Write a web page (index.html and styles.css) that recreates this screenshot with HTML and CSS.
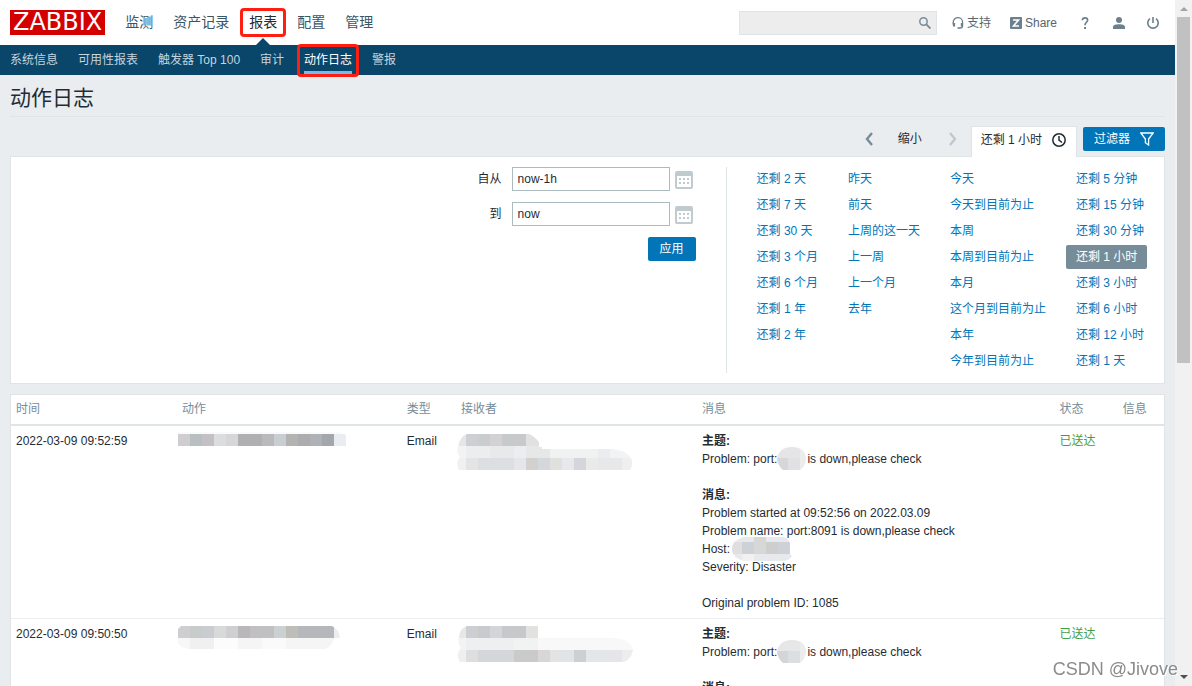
FILE: index.html
```html
<!DOCTYPE html>
<html lang="zh-CN">
<head>
<meta charset="utf-8">
<title>动作日志</title>
<link rel="stylesheet" href="styles.css">
</head>
<body>
<div class="page">
  <header class="top">
    <a class="logo" href="#">ZABBIX</a>
    <nav class="menu">
      <a href="#">监测</a>
      <a href="#">资产记录</a>
      <a href="#" class="active">报表</a>
      <a href="#">配置</a>
      <a href="#">管理</a>
    </nav>
    <form class="search">
      <input type="text" aria-label="搜索">
      <button type="button" aria-label="搜索"><svg width="12" height="12" viewBox="0 0 12 12" fill="none" stroke="currentColor"><circle cx="4.5" cy="4.5" r="3.7" stroke-width="1.5"/><path d="M7.3 7.3l4.2 4.2" stroke-width="1.9"/></svg></button>
    </form>
    <a class="tool" href="#"><svg width="12" height="12" viewBox="0 0 12 12" fill="none" stroke="currentColor"><path d="M1.2 7.5V5.3a4.7 4.7 0 0 1 9.4 0v3.5c0 1.6-1 2.2-2.6 2.2" stroke-width="1.3"/><path d="M2 6v3.6M9.9 6v3.6" stroke-width="2.2"/><path d="M5.5 11H8" stroke-width="1.6"/></svg>支持</a>
    <a class="tool share" href="#"><svg width="12" height="12" viewBox="0 0 12 12"><rect width="12" height="12" rx="1" fill="currentColor"/><path d="M3 3h5.500L3.500 9H9" fill="none" stroke="#fff" stroke-width="1.600"/></svg>Share</a>
    <a class="tool help" href="#" aria-label="帮助"><svg width="12" height="12" viewBox="0 0 12 12"><path d="M3.4 3.3C3.5 1.7 4.5.9 6 .9s2.6.9 2.6 2.3C8.600 5.300 6 5.300 6 8.200" fill="none" stroke="currentColor" stroke-width="1.700"/><rect x="5.100" y="10" width="1.900" height="2" fill="currentColor"/></svg></a>
    <a class="tool icon" href="#" aria-label="用户"><svg width="12" height="12" viewBox="0 0 12 12" fill="currentColor"><circle cx="6" cy="3" r="3"/><path d="M0 12V10C0 8 3 7.300 6 7.300S12 8 12 10v2z"/></svg></a>
    <a class="tool icon" href="#" aria-label="退出"><svg width="12" height="12" viewBox="0 0 12 12" fill="none" stroke="currentColor" stroke-width="1.600"><path d="M6 0v6M3 1.700A5.200 5.200 0 1 0 9 1.700"/></svg></a>
  </header>
  <nav class="submenu">
    <a href="#">系统信息</a>
    <a href="#">可用性报表</a>
    <a href="#">触发器 Top 100</a>
    <a href="#">审计</a>
    <a href="#" class="active">动作日志</a>
    <a href="#">警报</a>
  </nav>
  <main>
    <h1>动作日志</h1>
    <div class="tabs">
      <button type="button" class="nav-btn" aria-label="上一段"><svg width="8" height="14" viewBox="0 0 8 14" fill="none" stroke="#768d99" stroke-width="2.400"><path d="M7 1L2 7l5 6"/></svg></button>
      <button type="button" class="nav-btn zoom-out">缩小</button>
      <button type="button" class="nav-btn next" aria-label="下一段"><svg width="8" height="14" viewBox="0 0 8 14" fill="none" stroke="#c0c8cd" stroke-width="2.400"><path d="M1 1l5 6-5 6"/></svg></button>
      <a class="tab" href="#">还剩 1 小时<svg width="14" height="14" viewBox="0 0 14 14" fill="none" stroke="currentColor" stroke-width="1.500"><circle cx="7" cy="7" r="6.200"/><path d="M7 3v4.200l3 2.300"/></svg></a>
      <a class="tab-btn" href="#">过滤器<svg width="14" height="14" viewBox="0 0 14 14" fill="none" stroke="currentColor" stroke-width="1.300"><path d="M.8 1h12.400L8.600 7v6L5.400 10.700V7z"/></svg></a>
    </div>
    <section class="filter">
      <form class="range">
        <div class="field"><label for="from">自从</label><input id="from" type="text" value="now-1h"><button type="button" class="cal" aria-label="选择开始日期"><svg width="18" height="18" viewBox="0 0 18 18"><rect x="1" y="1" width="16" height="16" rx="1" fill="none" stroke="#c0cbd0" stroke-width="2"/><path d="M1 3h16" stroke="#c0cbd0" stroke-width="4"/><path d="M4 8h2m2 0h2m2 0h2M4 12h2m2 0h2m2 0h2" stroke="#c0cbd0" stroke-width="2"/></svg></button></div>
        <div class="field"><label for="to">到</label><input id="to" type="text" value="now"><button type="button" class="cal" aria-label="选择结束日期"><svg width="18" height="18" viewBox="0 0 18 18"><rect x="1" y="1" width="16" height="16" rx="1" fill="none" stroke="#c0cbd0" stroke-width="2"/><path d="M1 3h16" stroke="#c0cbd0" stroke-width="4"/><path d="M4 8h2m2 0h2m2 0h2M4 12h2m2 0h2m2 0h2" stroke="#c0cbd0" stroke-width="2"/></svg></button></div>
        <button type="button" class="apply">应用</button>
      </form>
      <div class="quick">
        <div><a href="#">还剩 2 天</a><a href="#">还剩 7 天</a><a href="#">还剩 30 天</a><a href="#">还剩 3 个月</a><a href="#">还剩 6 个月</a><a href="#">还剩 1 年</a><a href="#">还剩 2 年</a></div>
        <div><a href="#">昨天</a><a href="#">前天</a><a href="#">上周的这一天</a><a href="#">上一周</a><a href="#">上一个月</a><a href="#">去年</a></div>
        <div><a href="#">今天</a><a href="#">今天到目前为止</a><a href="#">本周</a><a href="#">本周到目前为止</a><a href="#">本月</a><a href="#">这个月到目前为止</a><a href="#">本年</a><a href="#">今年到目前为止</a></div>
        <div><a href="#">还剩 5 分钟</a><a href="#">还剩 15 分钟</a><a href="#">还剩 30 分钟</a><a href="#" class="selected">还剩 1 小时</a><a href="#">还剩 3 小时</a><a href="#">还剩 6 小时</a><a href="#">还剩 12 小时</a><a href="#">还剩 1 天</a></div>
      </div>
    </section>
    <table class="log">
      <colgroup><col class="c-time"><col class="c-action"><col class="c-type"><col class="c-to"><col class="c-msg"><col class="c-status"><col class="c-info"></colgroup>
      <thead><tr><th>时间</th><th>动作</th><th>类型</th><th>接收者</th><th>消息</th><th>状态</th><th>信息</th></tr></thead>
      <tbody>
        <tr>
          <td>2022-03-09 09:52:59</td>
          <td><svg class="mosaic" width="168" height="14" viewBox="0 0 168 14" shape-rendering="crispEdges"><path fill="#fafafb" d="M0 0h160l6 2H0z"/><path fill="#cfcdd0" d="M0 2h12v12H0z"/><path fill="#b9bfc1" d="M12 2h12v12H12z"/><path fill="#c3c1c4" d="M24 2h12v12H24z"/><path fill="#dcdddf" d="M36 2h12v12H36z"/><path fill="#d6d6d8" d="M48 2h12v12H48z"/><path fill="#b0afb2" d="M60 2h24v12H60z"/><path fill="#bab9bc" d="M84 2h12v12H84z"/><path fill="#c9ced1" d="M96 2h12v12H96z"/><path fill="#b3b4b1" d="M108 2h12v12h-12z"/><path fill="#adabae" d="M120 2h12v12h-12z"/><path fill="#aeb1b6" d="M132 2h12v12h-12z"/><path fill="#a3a6aa" d="M144 2h12v12h-12z"/><path fill="#e9ecf1" d="M156 2h10l2 2v10h-12z"/></svg></td>
          <td>Email</td>
          <td><svg class="mosaic" width="176" height="38" viewBox="0 0 176 38"><defs><clipPath id="m1"><path d="M10 2h62q5 2 10 8v5h3v2h70q14 1 19 9 3 6-1 12H2q-4-8 1-13-4-4-2-10Q3 4 10 2z"/></clipPath></defs><g clip-path="url(#m1)" shape-rendering="crispEdges"><path fill="#e6e6e7" d="M0 0h9v14H0z"/><path fill="#cdcfd3" d="M9 0h12v14H9z"/><path fill="#c9cdcd" d="M21 0h12v14H21z"/><path fill="#d2d2d4" d="M33 0h12v14H33z"/><path fill="#c6caca" d="M45 0h24v14H45z"/><path fill="#e1e1e2" d="M69 0h16v14H69z"/><path fill="#f5f3f2" d="M0 14h9v12H0z"/><path fill="#ecedef" d="M9 14h24v12H9z"/><path fill="#e8e9ea" d="M33 14h24v12H33z"/><path fill="#ecedee" d="M57 14h12v12H57z"/><path fill="#e6e7e7" d="M69 14h24v12H69z"/><path fill="#f0f1f1" d="M93 14h48v12H93z"/><path fill="#ebecf0" d="M141 14h12v12h-12z"/><path fill="#f3f3f5" d="M153 14h24v12h-24z"/><path fill="#eff0ef" d="M0 26h9v12H0z"/><path fill="#e4e4e4" d="M9 26h12v12H9z"/><path fill="#dcdee1" d="M21 26h36v12H21z"/><path fill="#e4e6e9" d="M57 26h12v12H57z"/><path fill="#d2d1cf" d="M69 26h12v12H69z"/><path fill="#d4d8dc" d="M81 26h12v12H81z"/><path fill="#e0e0de" d="M93 26h12v12H93z"/><path fill="#e8e8ea" d="M105 26h12v12h-12z"/><path fill="#d5d6db" d="M117 26h12v12h-12z"/><path fill="#ece9ea" d="M129 26h12v12h-12z"/><path fill="#e6e9e8" d="M141 26h24v12h-24z"/><path fill="#efeff1" d="M165 26h12v12h-12z"/></g></svg></td>
          <td class="message"><b>主题:</b><br>Problem: port:<span class="masked">8091<svg width="29" height="23" viewBox="0 0 29 23"><defs><clipPath id="m2"><path d="M0 12Q2 0 15 0t14 12q-1 8-6 11H6q-5-4-6-11z"/></clipPath></defs><g clip-path="url(#m2)" shape-rendering="crispEdges"><path fill="#e5e5e8" d="M0 0h29v12H0z"/><path fill="#d7d7db" d="M0 11h11v12H0z"/><path fill="#e1e1e3" d="M11 11h12v12H11z"/><path fill="#ebecec" d="M23 0h6v23h-6z"/></g></svg></span> is down,please check<br><br><b>消息:</b><br>Problem started at 09:52:56 on 2022.03.09<br>Problem name: port:8091 is down,please check<br>Host:<span class="masked host">&nbsp;<svg width="60" height="24" viewBox="0 0 60 24"><defs><clipPath id="m3"><path d="M12 0h38q6 0 8 6v11l2 2q-3 5-9 5H12Q0 21 0 12T12 0z"/></clipPath></defs><g clip-path="url(#m3)" shape-rendering="crispEdges"><path fill="#e8e9ec" d="M0 0h60v24H0z"/><path fill="#dfdfdf" d="M0 5h10v12H0z"/><path fill="#ccd2d6" d="M10 5h12v12H10z"/><path fill="#d7d7d8" d="M22 0h12v17H22z"/><path fill="#cecece" d="M34 5h12v12H34z"/><path fill="#ced1d7" d="M46 5h12v12H46z"/><path fill="#f2f1ef" d="M10 17h12v7H10z"/></g></svg></span><br>Severity: Disaster<br><br>Original problem ID: 1085</td>
          <td class="sent">已送达</td>
          <td></td>
        </tr>
        <tr>
          <td>2022-03-09 09:50:50</td>
          <td><svg class="mosaic" width="162" height="24" viewBox="0 0 162 24"><defs><clipPath id="m4"><path d="M3 1h151q7 3 8 12h-6q-2 9-9 11H12Q2 23 0 18V4z"/></clipPath></defs><g clip-path="url(#m4)" shape-rendering="crispEdges"><path fill="#cecdd0" d="M0 0h12v13H0z"/><path fill="#c7cccb" d="M12 0h12v13H12z"/><path fill="#cbcccf" d="M24 0h12v13H24z"/><path fill="#d8dada" d="M36 0h12v13H36z"/><path fill="#cfcfd1" d="M48 0h12v13H48z"/><path fill="#b9b7ba" d="M60 0h12v13H60z"/><path fill="#c0bfc2" d="M72 0h24v13H72z"/><path fill="#cbd0d3" d="M96 0h12v13H96z"/><path fill="#bebdb9" d="M108 0h12v13h-12z"/><path fill="#b6b7ba" d="M120 0h36v13h-36z"/><path fill="#ededf1" d="M156 0h6v13h-6z"/><path fill="#f7f7f7" d="M0 13h12v11H0z"/><path fill="#f0f0f1" d="M12 13h24v11H12z"/><path fill="#fcfcfc" d="M36 13h24v11H36z"/><path fill="#f5f5f6" d="M60 13h24v11H60z"/><path fill="#fafafa" d="M84 13h24v11H84z"/><path fill="#f4f5f4" d="M108 13h54v11h-54z"/></g></svg></td>
          <td>Email</td>
          <td><svg class="mosaic" width="176" height="37" viewBox="0 0 176 37"><defs><clipPath id="m5"><path d="M10 1h71v12h76q17 1 19 12-2 10-10 12H3q-5-8 1-14-4-5-2-11Q3 3 10 1z"/></clipPath></defs><g clip-path="url(#m5)" shape-rendering="crispEdges"><path fill="#e7e7e6" d="M0 0h9v13H0z"/><path fill="#cdced2" d="M9 0h12v13H9z"/><path fill="#c7cbcb" d="M21 0h12v13H21z"/><path fill="#d4d5d8" d="M33 0h12v13H33z"/><path fill="#c5c9ca" d="M45 0h24v13H45z"/><path fill="#e2e2e0" d="M69 0h12v13H69z"/><path fill="#f3f3f3" d="M0 13h9v12H0z"/><path fill="#eeeff1" d="M9 13h48v12H9z"/><path fill="#f1f3f2" d="M57 13h24v12H57z"/><path fill="#f8f8f9" d="M81 13h95v12H81z"/><path fill="#efefef" d="M0 25h9v12H0z"/><path fill="#dfdede" d="M9 25h12v12H9z"/><path fill="#d5d6d9" d="M21 25h36v12H21z"/><path fill="#cbcaca" d="M57 25h24v12H57z"/><path fill="#d8d7d6" d="M81 25h12v12H81z"/><path fill="#e2e3e4" d="M93 25h24v12H93z"/><path fill="#cdcfd2" d="M117 25h12v12h-12z"/><path fill="#e5e6e7" d="M129 25h36v12h-36z"/><path fill="#ededef" d="M165 25h11v12h-11z"/></g></svg></td>
          <td class="message"><b>主题:</b><br>Problem: port:<span class="masked">8091<svg width="29" height="23" viewBox="0 0 29 23"><g clip-path="url(#m2)" shape-rendering="crispEdges"><path fill="#e7e7e8" d="M0 0h29v12H0z"/><path fill="#d5d4d9" d="M0 11h11v12H0z"/><path fill="#dcdfe1" d="M11 11h12v12H11z"/><path fill="#ebecec" d="M23 0h6v23h-6z"/></g></svg></span> is down,please check<br><br><b>消息:</b></td>
          <td class="sent">已送达</td>
          <td></td>
        </tr>
      </tbody>
    </table>
  </main>
</div>
<div class="scrollbar"><i class="up"></i><i class="thumb"></i><i class="down"></i></div>
<div class="watermark">CSDN @Jivove</div>
</body>
</html>
```
FILE: styles.css
```css
* { box-sizing: border-box; }
body {
  margin: 0;
  height: 100vh;
  overflow: hidden;
  display: flex;
  background: #e9edf0;
  color: #1f2c33;
  font: 12px/18px "Liberation Sans", Arial, "Noto Sans CJK SC", sans-serif;
}
a { color: #0275b8; text-decoration: none; }
button, input { font: inherit; color: inherit; }
button { border: 0; padding: 0; background: none; }
svg { display: block; flex: none; }
.page { flex: 1; min-width: 0; }

.top {
  display: flex;
  align-items: center;
  height: 45px;
  padding: 0 16px 0 10px;
  background: #fff;
}
.logo {
  padding: 0 3px;
  background: #d40000;
  color: #fff;
  font: 24px/25px "DejaVu Sans", sans-serif;
}
.menu { display: flex; gap: 2px; margin: 0 auto 0 11px; }
.menu a {
  position: relative;
  padding: 2px 6px;
  border: 3px solid transparent;
  border-radius: 4px;
  color: #3c5563;
  font-size: 14px;
  line-height: 19px;
}
.menu a.active { border-color: #ff1f12; color: #1f2c33; }
.menu a.active::after {
  content: "";
  position: absolute;
  left: 13px;
  top: 27px;
  border: 7px solid transparent;
  border-top: 0;
  border-bottom-color: #0a466a;
}
.search {
  display: flex;
  align-items: center;
  width: 198px;
  height: 24px;
  margin-right: 1px;
  border: 1px solid #dfe4e7;
  background: #ededed;
}
.search input { flex: 1; min-width: 0; border: 0; background: none; }
.search button { padding: 0 5px; color: #768d99; }
.tool { display: flex; align-items: center; gap: 3px; margin-left: 14px; color: #57656d; }
.tool svg { color: #6c818d; }
.tool.share { margin-left: 19px; }
.tool.icon, .tool.help { margin-left: 22px; }

.submenu {
  display: flex;
  gap: 6px;
  height: 30px;
  padding-left: 3px;
  background: #0a466a;
}
.submenu a {
  display: flex;
  align-items: center;
  padding: 0 7px;
  color: #c5d4de;
}
.submenu a.active {
  position: relative;
  color: #fff;
  background: linear-gradient(#78b9ee, #78b9ee) center bottom 1px / 48px 3px no-repeat;
}
.submenu a.active::after {
  content: "";
  position: absolute;
  inset: -1px 0 -2px;
  border: 3px solid #ff1f12;
  border-radius: 4px;
}

main { padding: 0 10px; }
h1 {
  margin: 0 0 9px;
  padding: 9px 0 4px;
  border-bottom: 1px solid #dfe4e7;
  font-size: 21px;
  line-height: 28px;
  font-weight: 400;
}
.tabs { display: flex; justify-content: flex-end; align-items: flex-start; }
.nav-btn { height: 26px; margin-right: 25px; }
.nav-btn.zoom-out { margin-right: 27px; }
.nav-btn.next { margin-right: 14px; }
.tab {
  position: relative;
  display: flex;
  align-items: center;
  gap: 10px;
  height: 31px;
  margin: 0 6px -1px 0;
  padding: 0 10px 5px 9px;
  border: 1px solid #dfe4e7;
  border-bottom: 0;
  background: #fff;
  color: #1f2c33;
}
.tab-btn {
  display: flex;
  align-items: center;
  gap: 10px;
  height: 24px;
  margin-top: 1px;
  padding: 0 11px;
  border-radius: 2px;
  background: #0275b8;
  color: #fff;
}
.filter {
  display: flex;
  justify-content: flex-end;
  margin-bottom: 10px;
  padding: 10px;
  border: 1px solid #dfe4e7;
  background: #fff;
}
.range {
  display: flex;
  flex-direction: column;
  align-items: flex-end;
  gap: 11px;
  margin-right: 30px;
}
.field { display: flex; align-items: center; }
.field label { margin-right: 10px; }
.field input {
  width: 158px;
  height: 24px;
  padding: 0 5px;
  border: 1px solid #acbbc2;
  background: #fff;
}
.cal { width: 26px; padding: 2px 0 0 5px; }
.apply {
  height: 24px;
  padding: 0 12px;
  border-radius: 2px;
  background: #0275b8;
  color: #fff;
}
.quick { display: flex; gap: 10px; padding-left: 20px; border-left: 1px solid #dfe4e7; }
.quick div { display: flex; flex-direction: column; align-items: flex-start; gap: 2px; }
.quick a { padding: 3px 10px; border-radius: 2px; white-space: nowrap; }
.quick a.selected { background: #768d99; color: #fff; }

.log {
  width: 100%;
  table-layout: fixed;
  border: 1px solid #dfe4e7;
  border-spacing: 0;
  background: #fff;
}
.c-time { width: 14.4%; }
.c-action { width: 19.5%; }
.c-type { width: 4.7%; }
.c-to { width: 20.9%; }
.c-msg { width: 31%; }
.c-status { width: 5.5%; }
.c-info { width: 4%; }
.log th {
  padding: 5px 5px 6px;
  border-bottom: 2px solid #dfe4e7;
  color: #768d99;
  font-weight: 400;
  text-align: left;
}
.log td { padding: 6px 5px; border-bottom: 1px solid #ebeef0; vertical-align: top; }
.log td.sent { color: #429e47; }
.message { white-space: nowrap; }
.mosaic { margin-left: -4px; }
.masked { position: relative; }
.masked svg { position: absolute; left: 0; top: -5px; }
.masked.host svg { left: 2px; }

.scrollbar {
  display: flex;
  flex-direction: column;
  align-items: center;
  width: 17px;
  padding: 7px 0;
  background: #f1f1f1;
}
.scrollbar i { border: 4px solid transparent; }
.scrollbar .up { border-top: 0; border-bottom-color: #a3a3a3; }
.scrollbar .thumb { width: 13px; height: 51.5%; margin: 6px 0 auto; border: 0; background: #c1c1c1; }
.scrollbar .down { border-bottom: 0; border-top-color: #505050; }
.watermark {
  position: fixed;
  right: 14px;
  bottom: 5px;
  color: #8b8b8b;
  font-size: 18px;
  line-height: 24px;
  text-shadow: 1px 1px 0 #fff;
}
```
